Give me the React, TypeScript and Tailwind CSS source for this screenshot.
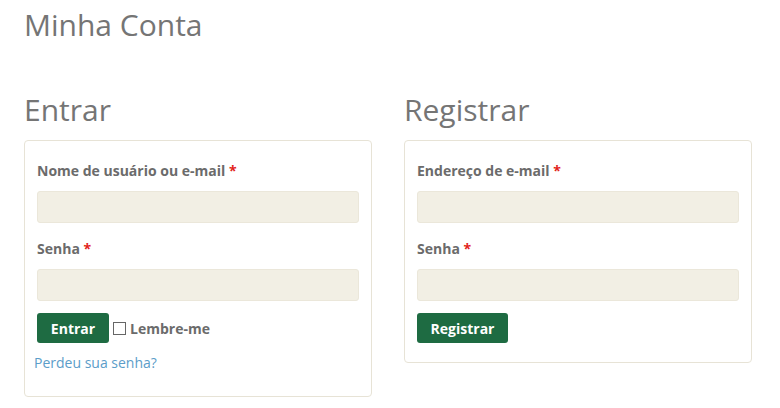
export default function App() {
  return (
    <div className="min-h-[408px] bg-white pl-[24px] pt-[7px] font-['Open_Sans',sans-serif]">
      <h1 className="text-[30px] leading-[36px] font-normal text-[#757575]">Minha Conta</h1>

      <div className="mt-[49px] grid w-[728px] grid-cols-2 items-start gap-[32px]">
        <section>
          <h2 className="text-[30px] leading-[36px] font-normal text-[#757575]">Entrar</h2>
          <form className="mt-[12px] rounded-[4px] border border-[#e7e3d6] px-[12px] pt-[20px] pb-[23px]">
            <Field label="Nome de usuário ou e-mail" />
            <div className="mt-[16px]">
              <Field label="Senha" />
            </div>
            <div className="mt-[12px] flex items-center gap-[4px]">
              <button
                type="button"
                className="h-[30px] w-[72px] rounded-[3px] bg-[#1e6b42] text-[14px] font-bold text-white"
              >
                Entrar
              </button>
              <span className="inline-block h-[13px] w-[13px] border border-[#666] bg-white" />
              <span className="text-[14px] font-bold text-[#6b6b6b]">Lembre-me</span>
            </div>
            <a className="mt-[10px] -ml-[3px] block text-[14px] leading-[20px] text-[#5b9dc9]" href="#">
              Perdeu sua senha?
            </a>
          </form>
        </section>

        <section>
          <h2 className="text-[30px] leading-[36px] font-normal text-[#757575]">Registrar</h2>
          <form className="mt-[12px] rounded-[4px] border border-[#e7e3d6] px-[12px] pt-[20px] pb-[19px]">
            <Field label="Endereço de e-mail" />
            <div className="mt-[16px]">
              <Field label="Senha" />
            </div>
            <button
              type="button"
              className="mt-[12px] h-[30px] w-[91px] rounded-[3px] bg-[#1e6b42] text-[14px] font-bold text-white"
            >
              Registrar
            </button>
          </form>
        </section>
      </div>
    </div>
  );
}

function Field({ label }: { label: string }) {
  return (
    <div>
      <label className="block text-[14px] leading-[20px] font-bold text-[#6b6b6b]">
        {label} <span className="text-[#e2231a]">*</span>
      </label>
      <div className="mt-[10px] h-[32px] rounded-[3px] border border-[#ebe7da] bg-[#f2efe4]" />
    </div>
  );
}
